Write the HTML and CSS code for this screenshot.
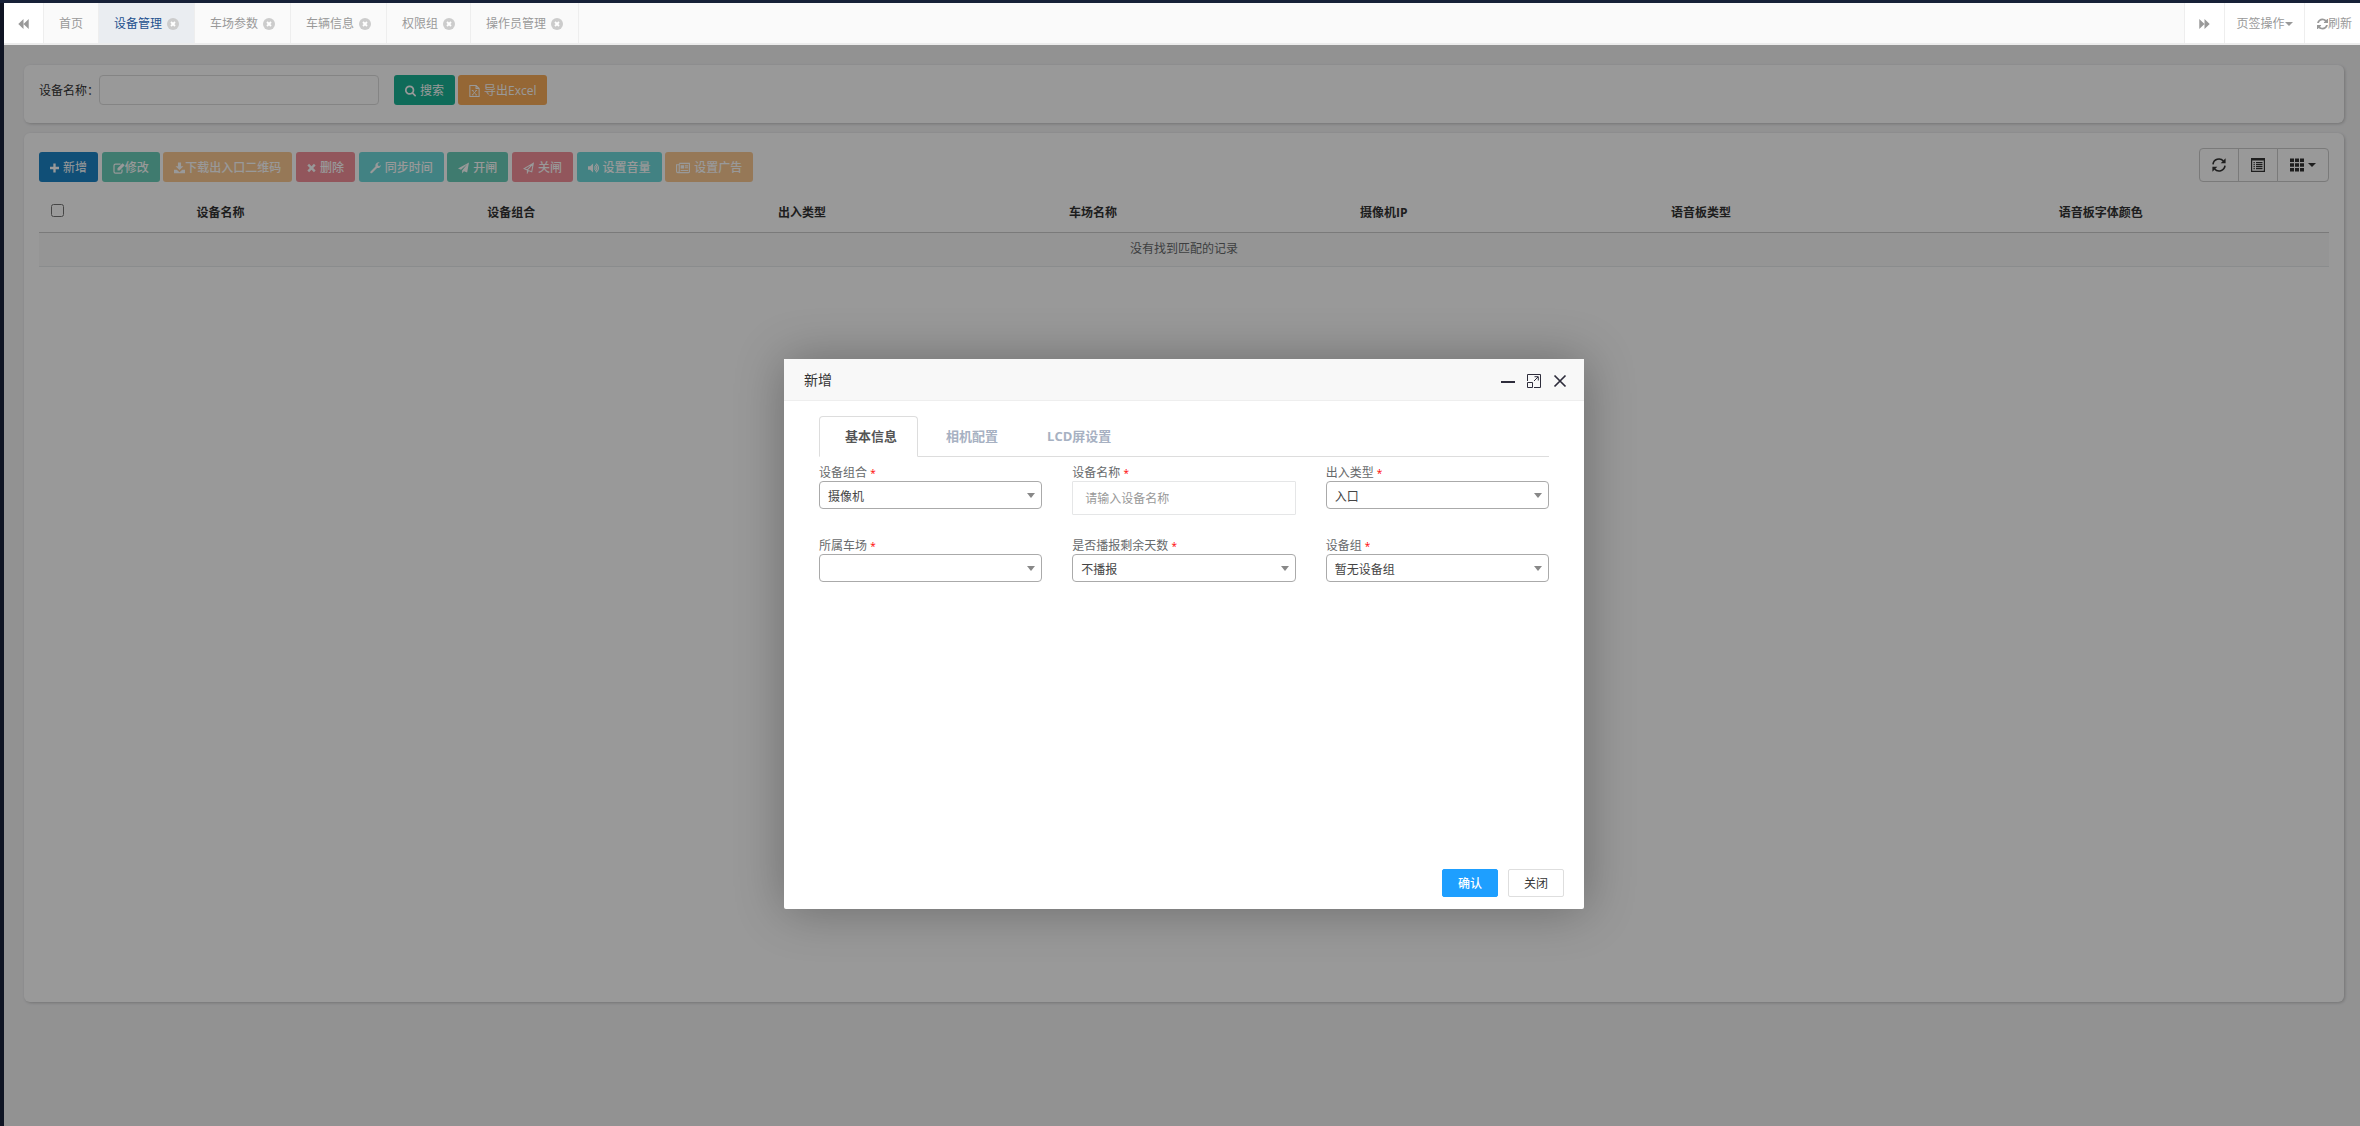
FILE: index.html
```html
<!DOCTYPE html>
<html lang="zh-CN">
<head>
<meta charset="utf-8">
<title>设备管理</title>
<link rel="stylesheet" href="styles.css">
</head>
<body>
<svg class="sprite" aria-hidden="true">
  <symbol id="times-circle" viewBox="0 0 12 12"><circle cx="6" cy="6" r="6"/><path d="M4 4l4 4M8 4l-4 4" stroke="#fff" stroke-width="1.8"/></symbol>
  <symbol id="backward" viewBox="0 0 12 12"><path d="M6 .5v11L.3 6zM11.700 .5v11L6 6z"/></symbol>
  <symbol id="forward" viewBox="0 0 12 12"><path d="M6 .5v11L11.700 6zM.3 .5v11L6 6z"/></symbol>
  <symbol id="refresh" viewBox="0 0 1536 1536"><path d="M1511 928q0 5-1 7-64 268-268 434.500T764 1536q-146 0-282.500-55T238 1324l-129 129q-19 19-45 19t-45-19-19-45V960q0-26 19-45t45-19h448q26 0 45 19t19 45-19 45l-137 137q71 66 161 102t187 36q134 0 250-65t186-179q11-17 53-117 8-23 30-23h192q13 0 22.500 9.500t9.500 22.500zm25-800v448q0 26-19 45t-45 19h-448q-26 0-45-19t-19-45 19-45l138-138Q969 256 768 256q-134 0-250 65T332 500q-11 17-53 117-8 23-30 23H50q-13 0-22.500-9.500T18 608v-7q65-268 270-434.500T768 0q146 0 284 55.500T1297 212l130-129q19-19 45-19t45 19 19 45z"/></symbol>
  <symbol id="search" viewBox="0 0 1664 1664"><path d="M1152 704q0-185-131.500-316.500T704 256 387.500 387.500 256 704t131.500 316.500T704 1152t316.500-131.500T1152 704zm512 832q0 52-38 90t-90 38q-54 0-90-38l-343-342q-179 124-399 124-143 0-273.500-55.500t-225-150-150-225T0 704t55.500-273.500 150-225 225-150T704 0t273.500 55.500 225 150 150 225T1408 704q0 220-124 399l343 343q37 37 37 90z"/></symbol>
  <symbol id="excel" viewBox="0 0 12 14"><path d="M.6.600h7.300l3.500 3.500v9.300H.6zM7.800.8v3.400h3.500" fill="none" stroke="currentColor" stroke-width="1.200"/><path d="M3.600 6.500l4.600 5M8.200 6.500l-4.600 5M2.900 6.400h2M7 6.400h2M2.900 11.600h2M7 11.600h2" fill="none" stroke="currentColor"/></symbol>
  <symbol id="plus" viewBox="0 0 10 10"><path d="M3.700 0h2.600v3.700H10v2.600H6.300V10H3.700V6.300H0V3.700h3.700z"/></symbol>
  <symbol id="edit" viewBox="0 0 12 12"><path d="M9 7.500v2.200a1.500 1.500 0 0 1-1.500 1.500h-5A1.500 1.500 0 0 1 1 9.700v-6a1.500 1.500 0 0 1 1.500-1.500h5" fill="none" stroke="currentColor" stroke-width="1.200"/><path d="M4.500 6.300L9.600 1.200 11.700 3.300 6.600 8.400H4.500z"/></symbol>
  <symbol id="download" viewBox="0 0 12 12"><path d="M4.300 0h3.400v4h2.600L6 8.300 1.700 4h2.600zM0 8h3l3 2.500L9 8h3v3.600H0z"/></symbol>
  <symbol id="times" viewBox="0 0 10 10"><path d="M2.300 .4L5 3.100 7.700.4 9.600 2.300 6.900 5l2.700 2.700-1.900 1.900L5 6.900 2.300 9.600.4 7.700 3.100 5 .4 2.300z"/></symbol>
  <symbol id="wrench" viewBox="0 0 12 12"><path d="M.6 9.700L6 4.300A3.600 3.600 0 0 1 10.600 0L8.500 1.300v1.800l1.400.9 2.100-1.300A3.600 3.600 0 0 1 7.700 6L2.300 11.400Q1.400 12 .6 11.400T.6 9.700z"/></symbol>
  <symbol id="plane" viewBox="0 0 12 12"><path d="M12 0L10 11 6.500 9.500 4.500 12V8.600L10 2 3.300 7.900 0 6.600z"/></symbol>
  <symbol id="plane-o" viewBox="0 0 12 12"><path d="M11.300.8L9.500 10.200 6 8.800 4.800 10.900V8.100L1.300 6.700zM4.800 8.100L11 1.200" fill="none" stroke="currentColor" stroke-width="1.200"/></symbol>
  <symbol id="volume" viewBox="0 0 13 12"><path d="M0 4h2.500L6 .8v10.400L2.500 8H0z"/><path d="M7.500 4.200q2 1.800 0 3.600M8.500 2.500q4 3.500 0 7M9.500.8q6 5.200 0 10.400" fill="none" stroke="currentColor" stroke-width="1.300"/></symbol>
  <symbol id="news" viewBox="0 0 15 11"><path d="M3.500.6h10.900v8.800q0 1-1 1H2Q.6 10.400.6 9V2h2.900M3.500 1v8q0 1.400-1.400 1.400M9.500 3.200H13M9.500 5.300H13M5 8.200h8" fill="none" stroke="currentColor" stroke-width="1.200"/><path d="M5 2.500h3.600v3.600H5z"/></symbol>
  <symbol id="sync" viewBox="0 0 14 14"><path d="M1 6.300A6 6 0 0 1 11.400 3M13 7.700A6 6 0 0 1 2.600 11" fill="none" stroke="currentColor" stroke-width="1.600"/><path d="M13.600.3v5H8.700zM.4 13.700v-5h4.900z"/></symbol>
  <symbol id="list" viewBox="0 0 14 14"><path d="M0 0h14v14H0zM1.200 2.500v10.300h11.600V2.500z" fill-rule="evenodd"/><path d="M2.500 4h1.300v1.200H2.500zM5 4h6.500v1.200H5zM2.500 6h1.300v1.200H2.500zM5 6h6.500v1.200H5zM2.500 8h1.300v1.200H2.500zM5 8h6.500v1.200H5zM2.500 10h1.300v1.200H2.500zM5 10h6.500v1.200H5z"/></symbol>
  <symbol id="grid" viewBox="0 0 14 14"><path d="M0 .5h4v3.500H0zM5 .5h4v3.500H5zM10 .5h4v3.500h-4zM0 5.200h4v3.600H0zM5 5.200h4v3.600H5zM10 5.200h4v3.600h-4zM0 10h4v3.500H0zM5 10h4v3.500H5zM10 10h4v3.500h-4z"/></symbol>
</svg>

<div class="app">
  <nav class="tabbar">
    <button class="roll roll-left" aria-label="向左"><svg class="i11"><use href="#backward"/></svg></button>
    <div class="tabs">
      <a class="tab" href="#">首页</a>
      <a class="tab active" href="#">设备管理<svg class="i12"><use href="#times-circle"/></svg></a>
      <a class="tab" href="#">车场参数<svg class="i12"><use href="#times-circle"/></svg></a>
      <a class="tab" href="#">车辆信息<svg class="i12"><use href="#times-circle"/></svg></a>
      <a class="tab" href="#">权限组<svg class="i12"><use href="#times-circle"/></svg></a>
      <a class="tab" href="#">操作员管理<svg class="i12"><use href="#times-circle"/></svg></a>
    </div>
    <button class="roll" aria-label="向右"><svg class="i11"><use href="#forward"/></svg></button>
    <button class="roll roll-menu">页签操作<span class="caret"></span></button>
    <button class="roll roll-refresh"><svg class="i11"><use href="#refresh"/></svg>刷新</button>
  </nav>

  <main class="page">
    <form class="card search-card">
      <label for="device-name">设备名称：</label>
      <input id="device-name" class="search-input" type="text">
      <button type="button" class="btn teal"><svg class="i11"><use href="#search"/></svg>搜索</button>
      <button type="button" class="btn orange"><svg class="i11"><use href="#excel"/></svg>导出Excel</button>
    </form>

    <section class="card list-card">
      <div class="toolbar">
        <div class="actions">
          <button class="btn blue"><svg class="i9"><use href="#plus"/></svg>新增</button>
          <button class="btn teal tight" disabled><svg class="i12"><use href="#edit"/></svg>修改</button>
          <button class="btn orange tight" disabled><svg class="i11"><use href="#download"/></svg>下载出入口二维码</button>
          <button class="btn red" disabled><svg class="i9"><use href="#times"/></svg>删除</button>
          <button class="btn cyan" disabled><svg class="i11"><use href="#wrench"/></svg>同步时间</button>
          <button class="btn teal" disabled><svg class="i11"><use href="#plane"/></svg>开闸</button>
          <button class="btn red" disabled><svg class="i11"><use href="#plane-o"/></svg>关闸</button>
          <button class="btn cyan" disabled><svg class="i11"><use href="#volume"/></svg>设置音量</button>
          <button class="btn orange" disabled><svg class="i14"><use href="#news"/></svg>设置广告</button>
        </div>
        <div class="tools">
          <button aria-label="刷新"><svg class="i14"><use href="#sync"/></svg></button>
          <button aria-label="切换视图"><svg class="i14"><use href="#list"/></svg></button>
          <button aria-label="列"><svg class="i14"><use href="#grid"/></svg><span class="caret"></span></button>
        </div>
      </div>
      <table>
        <colgroup><col class="c-check"><col class="c-std"><col class="c-std"><col class="c-std"><col class="c-std"><col class="c-std"><col class="c-wide"><col></colgroup>
        <thead>
          <tr><th class="check"><input type="checkbox" aria-label="全选"></th><th>设备名称</th><th>设备组合</th><th>出入类型</th><th>车场名称</th><th>摄像机IP</th><th>语音板类型</th><th>语音板字体颜色</th></tr>
        </thead>
        <tbody><tr><td colspan="8">没有找到匹配的记录</td></tr></tbody>
      </table>
    </section>

    <div class="overlay">
      <div class="modal" role="dialog" aria-labelledby="modal-title">
        <header>
          <h2 id="modal-title">新增</h2>
          <button aria-label="最小化"><svg class="i14" viewBox="0 0 14 14"><path d="M0 7h14v2H0z"/></svg></button>
          <button aria-label="最大化"><svg class="i14" viewBox="0 0 14 14"><path d="M.5 7V.5h13v13H7M.5 8.500h5v5h-5zM7 7l4-4M7.500 2.700h3.800v3.800" fill="none" stroke="currentColor"/></svg></button>
          <button aria-label="关闭窗口"><svg class="i14" viewBox="0 0 14 14"><path d="M1.500 1.500l11 11M12.500 1.500l-11 11" stroke="currentColor" stroke-width="1.700"/></svg></button>
        </header>
        <div class="modal-body">
          <nav class="subtabs">
            <a class="active" href="#">基本信息</a>
            <a href="#">相机配置</a>
            <a href="#">LCD屏设置</a>
          </nav>
          <form class="fields">
            <div class="field"><label for="f-group">设备组合 <i>*</i></label><div class="select"><select id="f-group"><option>摄像机</option></select></div></div>
            <div class="field"><label for="f-name">设备名称 <i>*</i></label><input id="f-name" type="text" placeholder="请输入设备名称"></div>
            <div class="field"><label for="f-type">出入类型 <i>*</i></label><div class="select"><select id="f-type"><option>入口</option></select></div></div>
            <div class="field"><label for="f-park">所属车场 <i>*</i></label><div class="select"><select id="f-park"><option></option></select></div></div>
            <div class="field"><label for="f-days">是否播报剩余天数 <i>*</i></label><div class="select"><select id="f-days"><option>不播报</option></select></div></div>
            <div class="field"><label for="f-set">设备组 <i>*</i></label><div class="select"><select id="f-set"><option>暂无设备组</option></select></div></div>
          </form>
        </div>
        <footer>
          <button class="primary">确认</button>
          <button>关闭</button>
        </footer>
      </div>
    </div>
  </main>
</div>
</body>
</html>
```

FILE: styles.css
```css
* { box-sizing: border-box; }

body {
  margin: 0;
  background: #0f1423;
  color: #676a6c;
  font: 12px/18px "Open Sans", "Noto Sans CJK SC", sans-serif;
}

button, input, select { font: inherit; color: inherit; margin: 0; }
button { cursor: pointer; }
a { color: inherit; text-decoration: none; }
svg { fill: currentColor; flex: none; }

.sprite { display: none; }
.i9 { width: 9px; height: 10px; }
.i11 { width: 11px; height: 12px; }
.i12 { width: 12px; height: 12px; }
.i14 { width: 14px; height: 14px; }

.caret {
  border: 4px solid transparent;
  border-top-color: currentColor;
  border-bottom: 0;
}

.app {
  display: flex;
  flex-direction: column;
  min-height: 100vh;
  padding-left: 4px;
  border-top: 3px solid #172138;
}

/* Tab bar */
.tabbar {
  display: flex;
  height: 42px;
  background: #fafafa;
  border-bottom: 2px solid #ececec;
  color: #999;
}
.tabs { display: flex; flex: 1; }
.tab {
  display: flex;
  align-items: center;
  gap: 5px;
  padding: 2px 15px 0;
  border-right: 1px solid #eee;
}
.tab svg { color: #ccc; }
.tab.active { background: #eaedf1; color: #23508e; }
.roll {
  display: flex;
  align-items: center;
  justify-content: center;
  width: 40px;
  padding: 2px 0 0;
  background: #fff;
  border: 0;
  border-left: 1px solid #eee;
}
.roll, .roll svg { color: #999; }
.roll-left { border-left: 0; border-right: 1px solid #eee; }
.roll-menu { width: 80px; }
.roll-refresh { width: 56px; padding-left: 12px; justify-content: flex-start; overflow: hidden; }

/* Page */
.page {
  position: relative;
  flex: 1;
  padding: 20px 16px 124px 20px;
  background: #f3f3f4;
}
.card {
  background: #fff;
  border-radius: 6px;
  box-shadow: 1px 1px 3px rgba(0, 0, 0, .2);
}
.search-card {
  display: flex;
  align-items: center;
  padding: 10px 15px 18px;
  color: #333;
}
.search-card label { width: 60px; padding-top: 2px; white-space: nowrap; }
.search-input {
  width: 280px;
  height: 30px;
  margin-right: 15px;
  padding: 0 8px;
  border: 1px solid #ddd;
  border-radius: 4px;
  background: transparent;
}
.search-card .btn + .btn { margin-left: 3px; }

.btn {
  display: inline-flex;
  align-items: center;
  gap: 4px;
  height: 30px;
  padding: 2px 10px 0;
  border: 1px solid transparent;
  border-radius: 3px;
  color: #fff;
  font-size: 12px;
  vertical-align: top;
  white-space: nowrap;
}
.btn.tight { gap: 0; }
.btn:disabled { opacity: .65; font-weight: 500; }
.teal { background: #1ab394; }
.orange { background: #f8ac59; }
.blue { background: #1c84c6; }
.red { background: #ed5565; }
.cyan { background: #23c6c8; }

.list-card {
  min-height: 869px;
  margin-top: 10px;
  padding: 15px;
}
.toolbar { display: flex; justify-content: space-between; }
.actions { padding-top: 4px; font-size: 14px; }
.tools { display: flex; height: 34px; }
.tools button {
  display: flex;
  align-items: center;
  gap: 4px;
  padding: 0 12px;
  border: 1px solid #ccc;
  background: #fff;
  color: #333;
}
.tools button + button { margin-left: -1px; }
.tools button:first-child { border-radius: 4px 0 0 4px; }
.tools button:last-child { border-radius: 0 4px 4px 0; }

table {
  width: 100%;
  margin-top: 10px;
  border-collapse: collapse;
  table-layout: fixed;
  text-align: center;
}
.c-check { width: 36px; }
.c-std { width: 12.7%; }
.c-wide { width: 15%; }
th { height: 40px; padding: 2px 0 0; border-bottom: 1px solid #ccc; color: #333; font-weight: 700; }
th.check { text-align: left; padding: 0 0 3px 12px; }
th input { display: block; width: 13px; height: 13px; margin: 0; }
td { height: 34px; padding: 0; background: #f9f9f9; border-bottom: 1px solid #e7eaec; }

/* Dialog */
.overlay {
  position: absolute;
  inset: 0;
  display: grid;
  place-items: center;
  padding: 97px 0 0 4px;
  background: rgba(0, 0, 0, .4);
}
.modal {
  display: flex;
  flex-direction: column;
  width: 800px;
  min-height: 550px;
  background: #fff;
  border-radius: 2px;
  box-shadow: 1px 1px 50px rgba(0, 0, 0, .3);
}
.modal header {
  display: flex;
  align-items: center;
  gap: 12px;
  height: 42px;
  padding: 0 17px 0 20px;
  background: #f8f8f8;
  border-bottom: 1px solid #eee;
}
.modal h2 { flex: 1; margin: 0; color: #333; font-size: 14px; font-weight: 400; }
.modal header button { display: flex; padding: 2px 0 0; border: 0; background: none; color: #2e2d3c; }
.modal-body { flex: 1; padding: 15px 35px; }

.subtabs { display: flex; gap: 2px; border-bottom: 1px solid #ddd; }
.subtabs a {
  height: 41px;
  margin-bottom: -1px;
  padding: 10px 20px 0 25px;
  border: 1px solid transparent;
  border-radius: 4px 4px 0 0;
  color: #a7b1c2;
  font-size: 13px;
  font-weight: 700;
}
.subtabs .active { background: #fff; border-color: #ddd #ddd #fff; color: #555; }

.fields {
  display: grid;
  grid-template-columns: repeat(3, 1fr);
  gap: 21px 30px;
  padding-top: 6px;
}
.field { display: flex; flex-direction: column; min-height: 52px; }
.field label { height: 18px; padding-top: 2px; line-height: 16px; }
.field i { color: #f00; font-size: 10px; font-style: normal; line-height: 1; }
.field input {
  height: 34px;
  padding: 0 12px;
  border: 1px solid #e5e6e7;
  border-radius: 1px;
  background: #fff;
}
.field input::placeholder { color: #999; opacity: 1; }
.select { position: relative; }
.select::after {
  content: "";
  position: absolute;
  top: 12px;
  right: 7px;
  border: 4px solid transparent;
  border-top: 5px solid #888;
  border-bottom: 0;
  pointer-events: none;
}
.select select {
  display: block;
  width: 100%;
  height: 28px;
  padding: 4px 20px 0 8px;
  appearance: none;
  background: #fff;
  border: 1px solid #aaa;
  border-radius: 4px;
  color: #444;
}

.modal footer { display: flex; justify-content: flex-end; gap: 10px; padding: 0 20px 12px; }
.modal footer button {
  width: 56px;
  height: 28px;
  padding: 2px 0 0;
  border: 1px solid #dedede;
  border-radius: 2px;
  background: #fff;
  color: #333;
}
.modal footer .primary { background: #1e9fff; border-color: #1e9fff; color: #fff; font-weight: 500; }
```
